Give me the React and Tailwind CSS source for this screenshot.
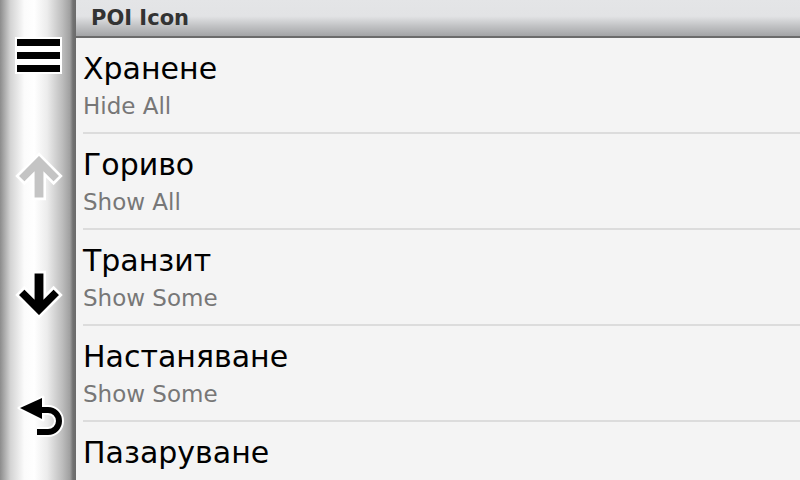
import React from "react";

const items = [
  { t: "Хранене", s: "Hide All" },
  { t: "Гориво", s: "Show All" },
  { t: "Транзит", s: "Show Some" },
  { t: "Настаняване", s: "Show Some" },
  { t: "Пазаруване", s: "Show Some" },
];

function UpArrow({ fill }) {
  return (
    <svg width="50" height="50" viewBox="0 0 48 48">
      <polygon
        points="24,3 45,24 38,31 29.5,22.5 29.5,46 18.5,46 18.5,22.5 10,31 3,24"
        fill={fill}
        stroke="#fff"
        strokeWidth="2.5"
        strokeLinejoin="miter"
      />
    </svg>
  );
}

function BackArrow() {
  return (
    <svg width="52" height="50" viewBox="0 0 52 50">
      <path d="M24 17 H32 A11 11 0 0 1 32 39 H21" fill="none" stroke="#fff" strokeWidth="10" />
      <polygon points="3,15 27,4 27,27" fill="#000" stroke="#fff" strokeWidth="3" strokeLinejoin="round" />
      <path d="M24 17 H32 A11 11 0 0 1 32 39 H21" fill="none" stroke="#000" strokeWidth="6" />
      <polygon points="4,15 26,5 26,26" fill="#000" />
    </svg>
  );
}

export default function App() {
  return (
    <div
      className="w-[800px] h-[480px] overflow-hidden flex bg-[#f4f4f4]"
      style={{ fontFamily: '"DejaVu Sans", sans-serif' }}
    >
      <div className="w-[76px] h-full shrink-0 relative bg-[linear-gradient(to_right,#8c8c8c_0%,#d4d4d4_14%,#fbfbfb_32%,#ffffff_45%,#ececec_62%,#bdbdbd_82%,#a0a0a0_92%,#727272_96%,#6a6a6a_100%)]">
        <div className="absolute left-[15px] top-[37px] bg-white p-[2px] flex flex-col gap-[6px]">
          <div className="w-[43px] h-[7px] bg-black" />
          <div className="w-[43px] h-[7px] bg-black" />
          <div className="w-[43px] h-[7px] bg-black" />
        </div>
        <div className="absolute left-[14px] top-[151px]">
          <UpArrow fill="#c4c4c4" />
        </div>
        <div className="absolute left-[14px] top-[270px] rotate-180">
          <UpArrow fill="#000" />
        </div>
        <div className="absolute left-[16px] top-[393px]">
          <BackArrow />
        </div>
      </div>
      <div className="flex-1 flex flex-col min-w-0">
        <div className="h-[38px] shrink-0 border-b-2 border-[#6b6b6b] bg-[linear-gradient(to_bottom,#e4e5e7_0%,#e2e3e5_45%,#c4c5c7_70%,#a3a4a6_100%)] flex items-center pl-[15px]">
          <span className="text-[21px] font-bold text-[#333333] leading-none">POI Icon</span>
        </div>
        <div className="flex flex-col">
          {items.map((it, i) => (
            <div key={i} className="h-[96px] shrink-0 pl-[7px] flex flex-col">
              <div className="flex-1 flex flex-col pt-[16px]">
                <div className="text-[30px] leading-[30px] text-black">{it.t}</div>
                <div className="text-[23px] leading-[26px] text-[#777777] mt-[9px]">{it.s}</div>
              </div>
              <div className="h-[2px] bg-[#dcdcdc] shrink-0" />
            </div>
          ))}
        </div>
      </div>
    </div>
  );
}
